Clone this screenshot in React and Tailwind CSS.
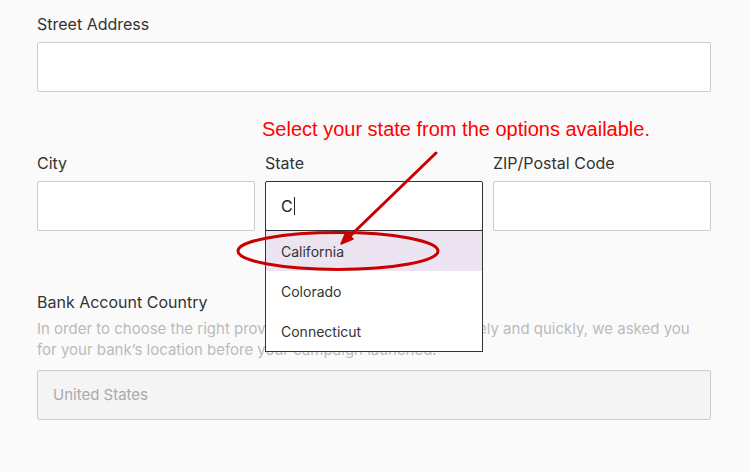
import React from "react";

const font = { fontFamily: "Inter, Roboto, 'Liberation Sans', sans-serif" };

function Field({ label, children, className = "" }) {
  return (
    <div className={className}>
      <div className="text-[16px] leading-[24px] text-[#333] mb-[6px]">{label}</div>
      {children}
    </div>
  );
}

function TextBox({ active = false, children }) {
  return (
    <div
      className={`h-[50px] bg-white rounded-[2px] border flex items-center px-[15px] text-[16px] text-[#222] ${
        active ? "border-[#333]" : "border-[#ccc]"
      }`}
    >
      {children}
    </div>
  );
}

function StateMenu() {
  const items = ["California", "Colorado", "Connecticut"];
  return (
    <div className="absolute left-0 right-0 top-[49px] bg-white border border-[#333] z-10">
      {items.map((s, i) => (
        <div
          key={s}
          className={`h-[40px] flex items-center px-[15px] text-[14px] text-[#333] ${
            i === 0 ? "bg-[#ece4f0]" : ""
          }`}
        >
          {s}
        </div>
      ))}
    </div>
  );
}

export default function App() {
  return (
    <div className="relative w-[750px] h-[472px] overflow-hidden bg-[#fafafa]" style={font}>
      <div className="pl-[37px] pr-[39px] pt-[12px] w-[750px]">
        <Field label="Street Address">
          <TextBox />
        </Field>

        <div className="grid grid-cols-3 gap-x-[10px] mt-[59px]">
          <Field label="City">
            <TextBox />
          </Field>
          <Field label="State">
            <div className="relative">
              <TextBox active>
                <span>C</span>
                <span className="inline-block w-px h-[18px] bg-[#222] ml-[1px]" />
              </TextBox>
              <StateMenu />
            </div>
          </Field>
          <Field label="ZIP/Postal Code">
            <TextBox />
          </Field>
        </div>

        <div className="mt-[59px]">
          <div className="text-[16px] leading-[24px] text-[#333]">Bank Account Country</div>
          <p className="mt-[4px] text-[15px] leading-[21px] text-[#bbb]">
            In order to choose the right provider to process your funds safely and quickly, we asked you
            for your bank’s location before your campaign launched.
          </p>
          <div className="mt-[10px] h-[50px] rounded-[2px] border border-[#ccc] bg-[#f4f4f4] flex items-center px-[15px] text-[15px] text-[#aaa]">
            United States
          </div>
        </div>
      </div>

      {/* annotation overlay */}
      <div
        className="absolute left-[262px] top-[116px] text-[20px] leading-[26px] text-[#ff0000] z-20 whitespace-nowrap"
        style={{ fontFamily: "'Liberation Sans', Arial, sans-serif" }}
      >
        Select your state from the options available.
      </div>
      <svg className="absolute inset-0 z-20 pointer-events-none" width="750" height="472" viewBox="0 0 750 472">
        <line x1="436" y1="153" x2="348" y2="238" stroke="#c80000" strokeWidth="3" strokeLinecap="round" />
        <polygon points="341,244 353,239 346,232" fill="#c80000" stroke="#c80000" strokeWidth="1.5" strokeLinejoin="round" />
        <ellipse cx="338" cy="251" rx="100" ry="18.5" fill="none" stroke="#c80000" strokeWidth="3" />
      </svg>
    </div>
  );
}
